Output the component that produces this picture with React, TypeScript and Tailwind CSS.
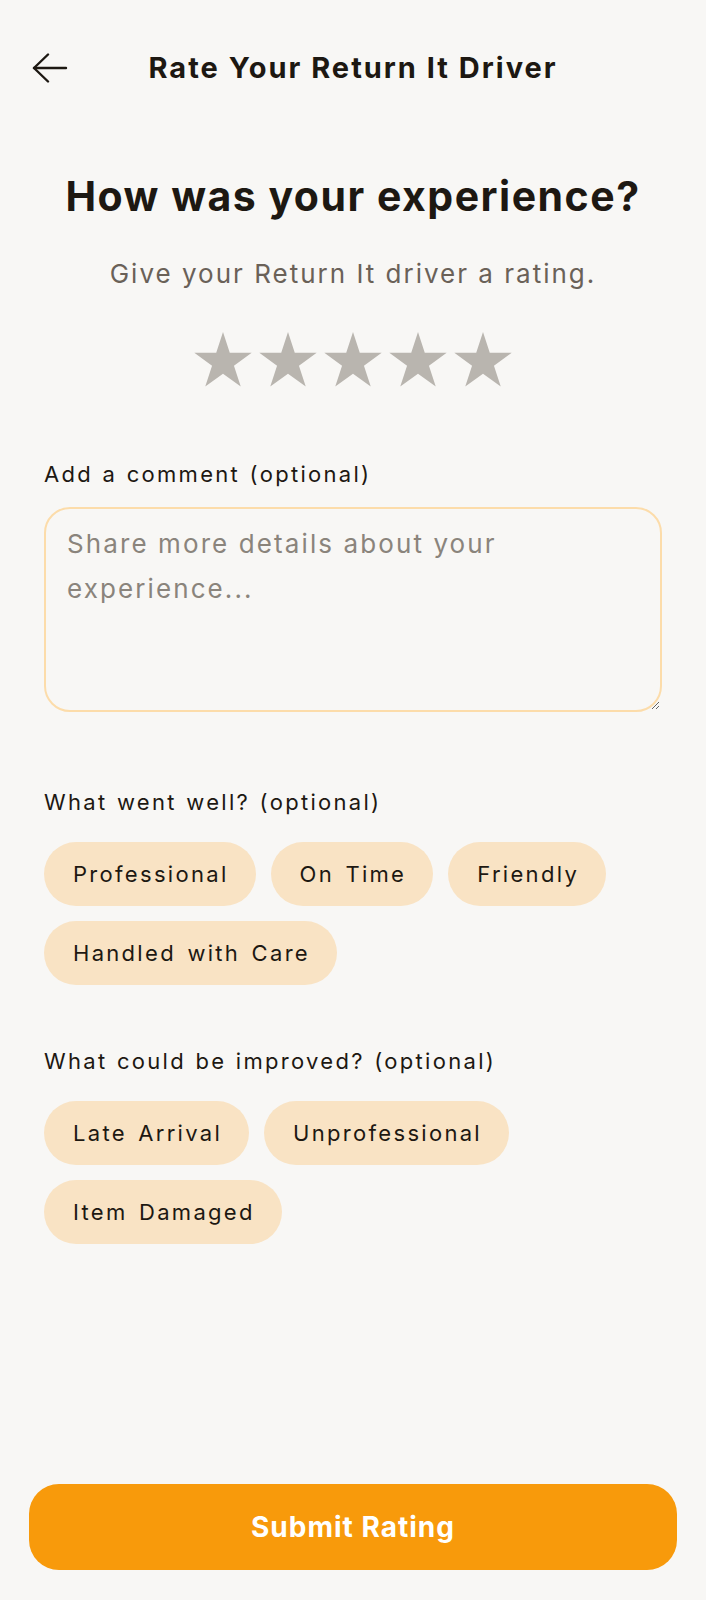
const wentWell = ["Professional", "On Time", "Friendly", "Handled with Care"];
const improve = ["Late Arrival", "Unprofessional", "Item Damaged"];

export default function App() {
  return (
    <main
      className="flex min-h-[1600px] flex-col bg-[#f8f7f5] text-[#1d1812]"
      style={{ fontFamily: "Inter, 'Noto Sans', sans-serif" }}
    >
      <header className="relative mt-[40px] flex h-[56px] items-center justify-center">
        <button className="absolute left-[32px] top-[13px]">
          <BackArrow />
        </button>
        <h1 className="text-[29px] font-bold tracking-[2px]">Rate Your Return It Driver</h1>
      </header>

      <section className="mt-[72px] flex flex-col items-center">
        <h2 className="text-[41px] leading-[56px] font-bold tracking-[1.5px]">How was your experience?</h2>
        <p className="mt-[34px] text-[26px] leading-[32px] tracking-[2px] text-[#6a6158]">
          Give your Return It driver a rating.
        </p>
        <div className="mt-[42px] flex gap-[7px]">
          {[0, 1, 2, 3, 4].map((i) => (
            <Star key={i} />
          ))}
        </div>
      </section>

      <section className="mt-[72px] px-[44px]">
        <Label>Add a comment (optional)</Label>
        <textarea
          className="mt-[18px] block h-[205px] w-full rounded-[26px] border-2 border-[#fcdcaa] bg-transparent px-[21px] py-[12px] text-[26px] leading-[45px] tracking-[2.1px] placeholder:text-[#8a847c] focus:outline-none"
          placeholder="Share more details about your experience..."
        />

        <div className="mt-[75px]">
          <Label>What went well? (optional)</Label>
          <Chips items={wentWell} />
        </div>

        <div className="mt-[61px]">
          <Label>What could be improved? (optional)</Label>
          <Chips items={improve} />
        </div>
      </section>

      <div className="mt-auto px-[29px] pb-[30px]">
        <button className="h-[86px] w-full rounded-[30px] bg-[#f89a0b] text-[28px] font-bold tracking-[1px] text-white">
          Submit Rating
        </button>
      </div>
    </main>
  );
}

function Label({ children }: { children: React.ReactNode }) {
  return (
    <p className="text-[22px] leading-[30px] tracking-[2.3px] [word-spacing:1px] text-[#1d1812]">{children}</p>
  );
}

function Chips({ items }: { items: string[] }) {
  return (
    <div className="mt-[25px] flex flex-wrap gap-[15px]">
      {items.map((item) => (
        <span
          key={item}
          className="flex h-[64px] items-center rounded-full bg-[#f9e3c4] pr-[27px] pl-[29px] text-[22px] tracking-[2.3px] [word-spacing:3px] text-[#1d1812]"
        >
          {item}
        </span>
      ))}
    </div>
  );
}

function BackArrow() {
  return (
    <svg width="36" height="30" viewBox="0 0 36 30" fill="none" stroke="#1d1812" strokeWidth="2.4" strokeLinecap="round" strokeLinejoin="round">
      <path d="M2 15H34" />
      <path d="M16 1.5L2 15L16 28.5" />
    </svg>
  );
}

function Star() {
  return (
    <svg viewBox="0 0 24 23" className="h-[55px] w-[58px] fill-[#b9b5af]">
      <path d="M12 0L14.83 8.72H24L16.58 14.11L19.42 22.83L12 17.44L4.58 22.83L7.42 14.11L0 8.72H9.17Z" />
    </svg>
  );
}
